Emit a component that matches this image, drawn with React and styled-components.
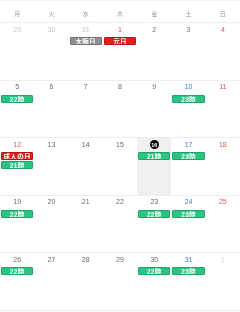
import React from "react"
import styled, { createGlobalStyle } from "styled-components"

const GlobalStyle = createGlobalStyle`
  body {
    margin: 0;
    background: #fff;
    font-family: "Liberation Sans", "Noto Sans CJK JP", sans-serif;
  }
`

const WEEKDAYS = ["月", "火", "水", "木", "金", "土", "日"]

const weeks = [
  [
    { d: 29, kind: "other" },
    { d: 30, kind: "other" },
    { d: 31, kind: "other", events: [{ label: "大晦日", tone: "grey" }] },
    { d: 1, kind: "hol", events: [{ label: "元日", tone: "red" }] },
    { d: 2 },
    { d: 3, kind: "sat" },
    { d: 4, kind: "sun" },
  ],
  [
    { d: 5, events: [{ label: "22時", tone: "green" }] },
    { d: 6 },
    { d: 7 },
    { d: 8 },
    { d: 9 },
    { d: 10, kind: "sat", events: [{ label: "23時", tone: "green" }] },
    { d: 11, kind: "sun" },
  ],
  [
    {
      d: 12,
      kind: "hol",
      events: [
        { label: "成人の日", tone: "red" },
        { label: "21時", tone: "green" },
      ],
    },
    { d: 13 },
    { d: 14 },
    { d: 15 },
    { d: 16, today: true, events: [{ label: "21時", tone: "green" }] },
    { d: 17, kind: "sat", events: [{ label: "23時", tone: "green" }] },
    { d: 18, kind: "sun" },
  ],
  [
    { d: 19, events: [{ label: "22時", tone: "green" }] },
    { d: 20 },
    { d: 21 },
    { d: 22 },
    { d: 23, events: [{ label: "22時", tone: "green" }] },
    { d: 24, kind: "sat", events: [{ label: "23時", tone: "green" }] },
    { d: 25, kind: "sun" },
  ],
  [
    { d: 26, events: [{ label: "22時", tone: "green" }] },
    { d: 27 },
    { d: 28 },
    { d: 29 },
    { d: 30, events: [{ label: "22時", tone: "green" }] },
    { d: 31, kind: "sat", events: [{ label: "23時", tone: "green" }] },
    { d: 1, kind: "next" },
  ],
]

const App = () => (
  <>
    <GlobalStyle />
    <Calendar>
      {WEEKDAYS.map((w) => (
        <Weekday key={w}>{w}</Weekday>
      ))}
      {weeks.map((week, wi) =>
        week.map((day, di) => (
          <Cell key={`${wi}-${di}`} $today={day.today}>
            <DateLine>
              {day.today ? (
                <TodayMark>{day.d}</TodayMark>
              ) : (
                <DateNum $kind={day.kind}>{day.d}</DateNum>
              )}
            </DateLine>
            <Events>
              {(day.events || []).map((ev) => (
                <Chip key={ev.label} $tone={ev.tone}>
                  {ev.label}
                </Chip>
              ))}
            </Events>
          </Cell>
        ))
      )}
    </Calendar>
  </>
)

export default App

const dateColors = {
  other: "#c8c8c8",
  next: "#f0c4c4",
  sat: "#4a78cf",
  sun: "#d4605c",
  hol: "#d4605c",
}

const chipColors = {
  green: { bg: "#2cc483", border: "#1fa56a" },
  grey: { bg: "#8e8e93", border: "#707075" },
  red: { bg: "#e0201e", border: "#b81412" },
}

const Calendar = styled.div`
  display: grid;
  grid-template-columns: repeat(7, 1fr);
  grid-template-rows: 21px repeat(5, 57.6px);
  width: 240px;
  border-top: 1px solid #f2f2f2;
  border-bottom: 1px solid #eeeeee;
  will-change: transform;
`

const Weekday = styled.div`
  display: flex;
  align-items: center;
  justify-content: center;
  font-size: 6px;
  color: #9a9a9a;
  padding-top: 4px;
`

const Cell = styled.div`
  display: flex;
  flex-direction: column;
  border-top: 1px solid #eeeeee;
  background: ${(p) => (p.$today ? "#f0f0f0" : "transparent")};
  min-width: 0;
`

const DateLine = styled.div`
  display: flex;
  justify-content: center;
  align-items: center;
  height: 11px;
  margin-top: 1px;
`

const DateNum = styled.span`
  font-size: 7px;
  line-height: 8px;
  color: ${(p) => dateColors[p.$kind] || "#6a6a6a"};
`

const TodayMark = styled.span`
  display: flex;
  align-items: center;
  justify-content: center;
  width: 9px;
  height: 9px;
  border-radius: 50%;
  background: #000;
  color: #fff;
  font-size: 5.5px;
  font-weight: bold;
`

const Events = styled.div`
  display: flex;
  flex-direction: column;
  gap: 1px;
  padding: 2px 1px 0;
`

const Chip = styled.div`
  height: 8px;
  box-sizing: border-box;
  display: flex;
  align-items: center;
  justify-content: center;
  border: 1px solid ${(p) => chipColors[p.$tone].border};
  border-radius: 1px;
  background: ${(p) => chipColors[p.$tone].bg};
  color: #fff;
  font-size: 6.5px;
  font-weight: bold;
  letter-spacing: 0.3px;
  white-space: nowrap;
  overflow: hidden;
`
